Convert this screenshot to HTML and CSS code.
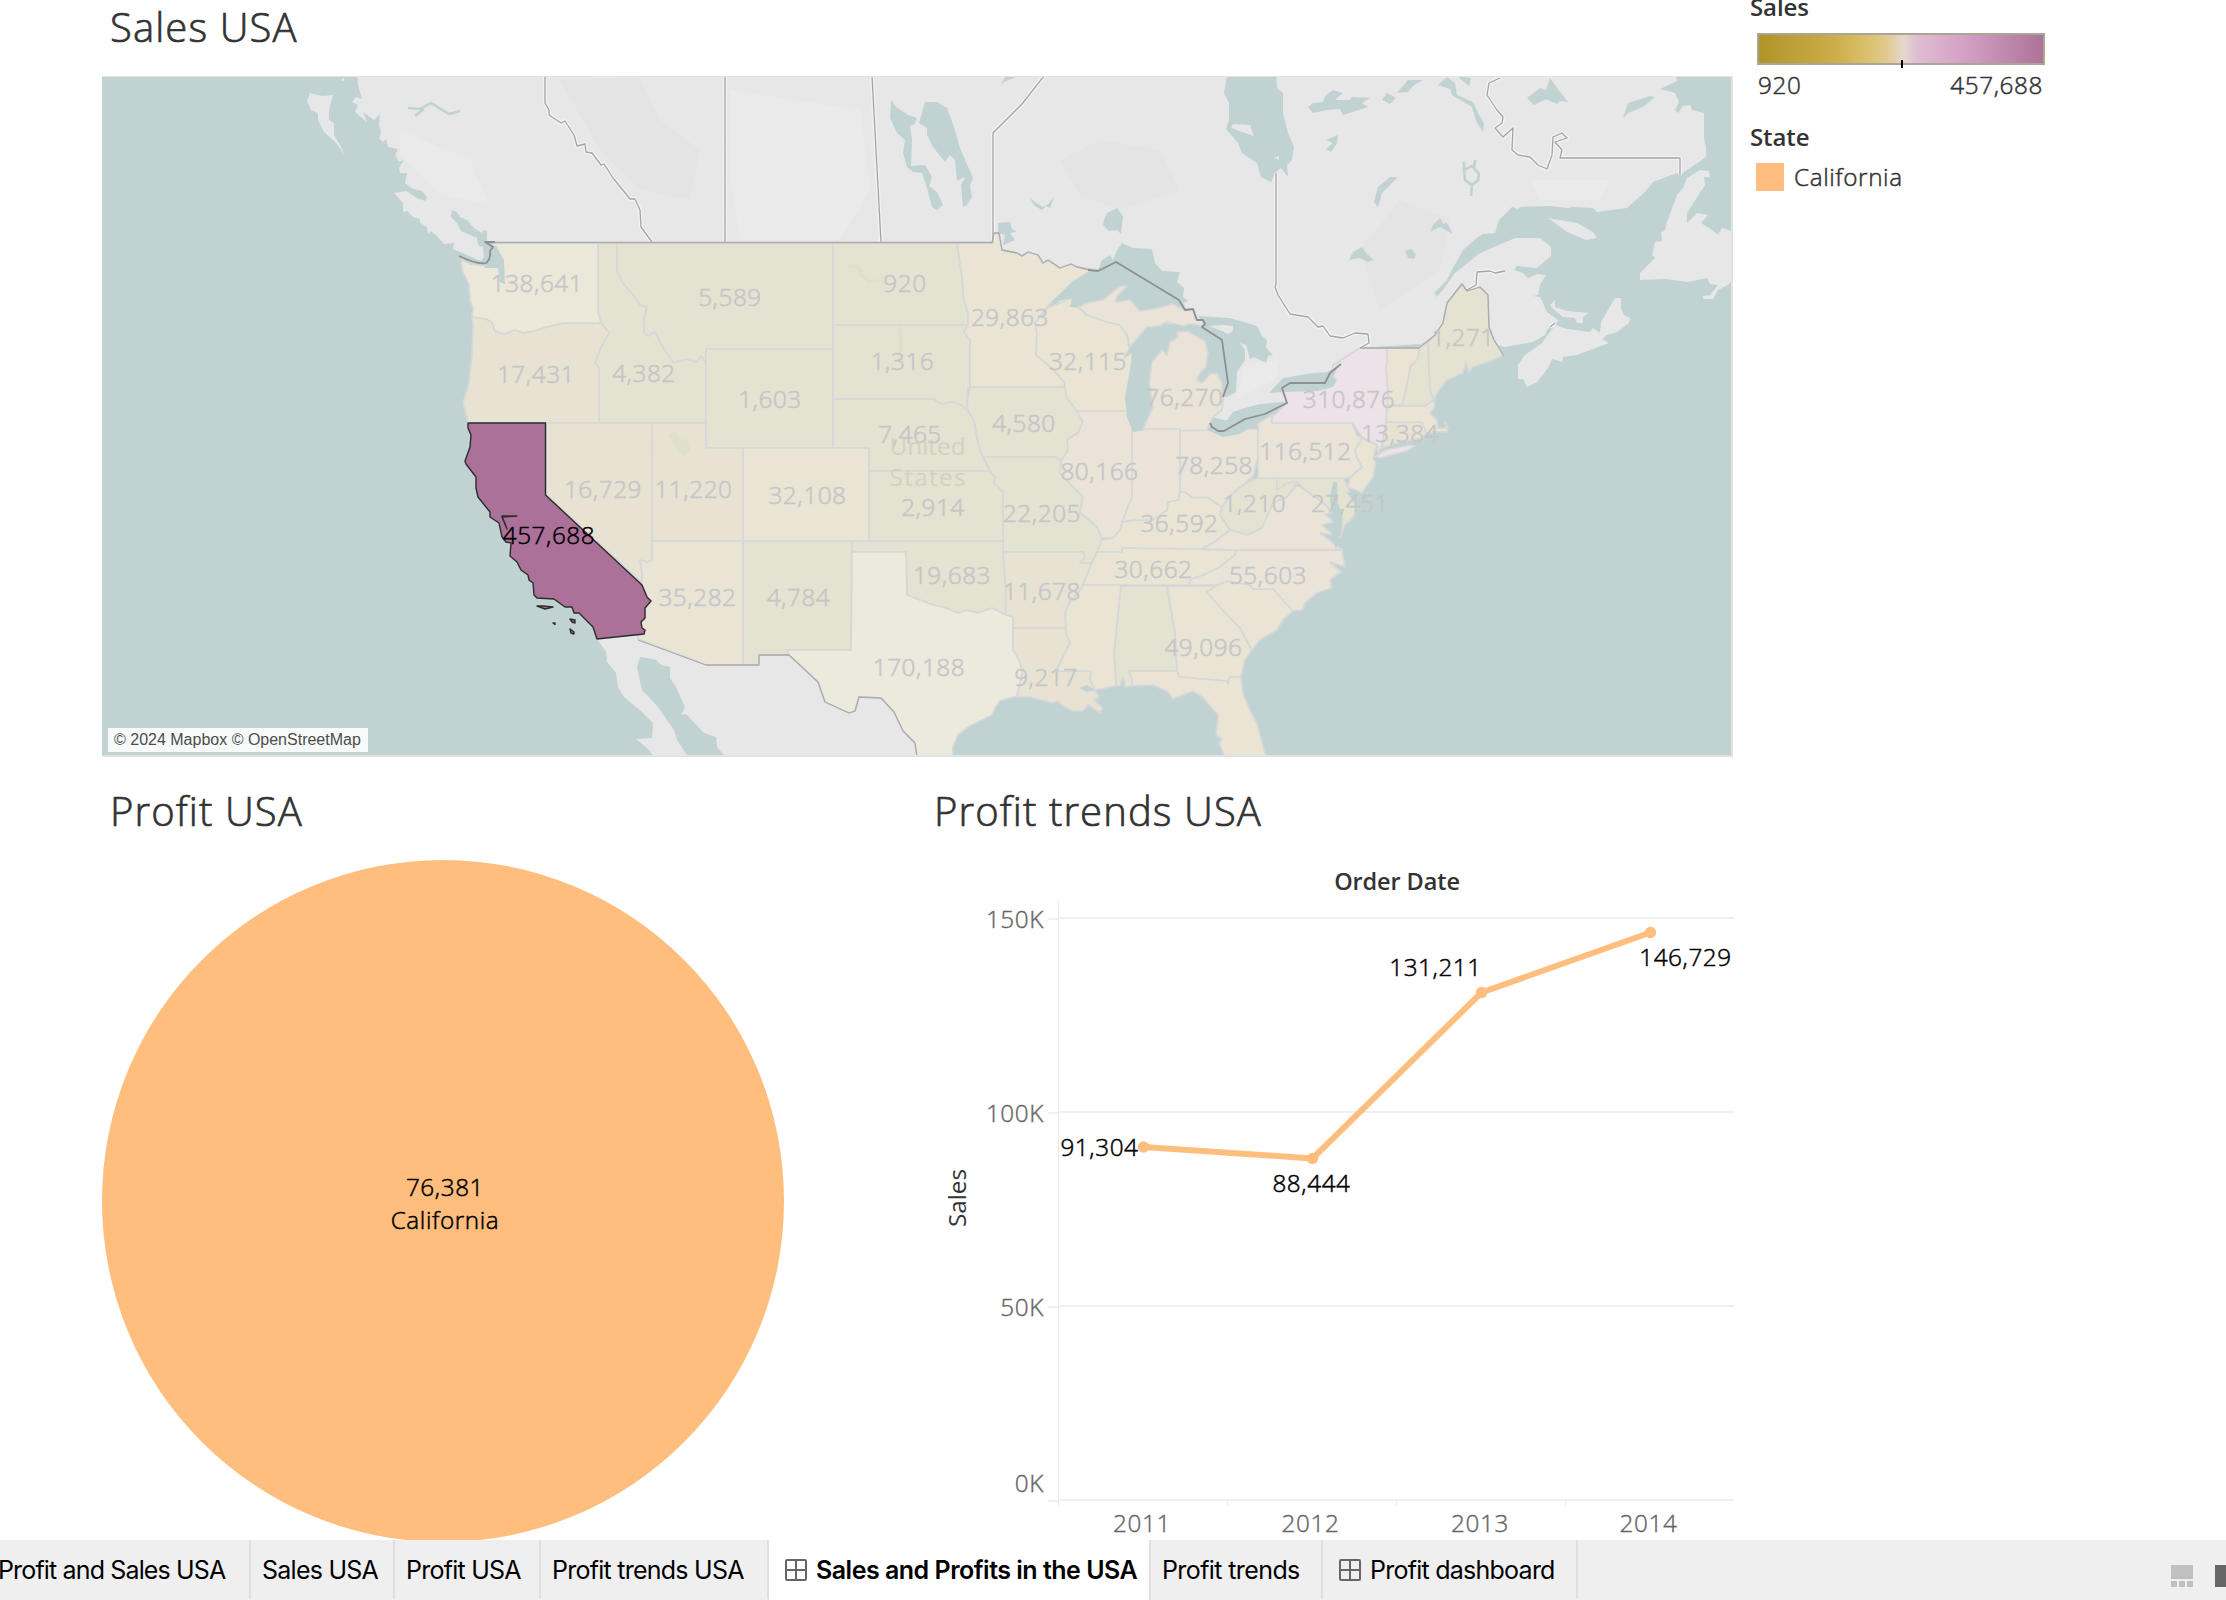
FILE: index.html
```html
<!DOCTYPE html>
<html lang="en">
<head>
<meta charset="utf-8">
<title>Sales and Profits in the USA</title>
<link rel="stylesheet" href="styles.css">
</head>
<body>
<main class="dashboard">
  <div class="views">
    <section class="sales">
      <h2 class="title">Sales USA</h2>
      <div class="map-frame">
        <svg class="map" viewBox="102 77 1629 678" width="1629" height="678">
          <!-- Canada and Mexico -->
          <g class="land">
            <path d="M357 70L358 85 362 99 356 97 352 102 358 105 355 112 367 122 363 112 374 120 380 114 379 125 381 132 379 138 383 142 386 139 388 147 398 149 395 155 399 162 404 160 399 168 400 173 407 173 405 183 413 189 422 191 427 197 425 201 417 198 406 191 394 193 403 203 403 212 407 211 413 217 420 219 420 223 427 227 428 234 431 231 436 235 444 244 454 243 453 249 481 261 484 257 483 247 478 245 477 238 461 231 457 223 451 217 452 210 457 212 460 217 467 220 474 228 482 233 483 230 487 231 487 243 992 243 1050 300 1200 330 1223 400 1213 417 1240 425 1290 400 1360 348 1480 340 1505 347 1533 342 1545 335 1548 328 1542 332 1555 325 1567 329 1590 332 1593 328 1600 333 1601 322 1615 298 1621 298 1621 308 1624 315 1630 318 1629 323 1617 332 1607 335 1602 339 1609 343 1577 355 1563 357 1562 362 1552 359 1548 368 1537 382 1527 387 1523 379 1518 379 1518 365 1525 355 1542 343 1547 336 1556 324 1558 320 1547 312 1540 297 1533 296 1538 295 1540 285 1546 275 1537 274 1528 278 1523 273 1514 270 1517 266 1537 268 1551 256 1551 247 1540 238 1515 238 1480 253 1455 273 1443 290 1436 297 1435 292 1447 280 1453 268 1463 250 1477 238 1483 234 1495 233 1499 220 1512 207 1518 209 1520 207 1550 206 1568 208 1573 207 1593 208 1597 212 1627 208 1645 192 1653 182 1677 173 1680 175 1706 157 1706 148 1704 138 1704 113 1692 110 1690 105 1683 106 1678 113 1675 110 1679 102 1675 93 1660 89 1677 81 1674 70Z"/>
            <path d="M310 93L322 96 333 95 329 110 329 120 334 123 334 135 340 145 345 155 336 143 324 132 318 120 318 113 311 110 307 101Z"/>
            <path d="M1700 170L1709 171 1710 177 1704 177 1705 185 1687 213 1687 223 1697 213 1708 215 1701 223 1712 230 1718 235 1722 228 1734 232 1734 278 1728 285 1718 290 1713 299 1703 299 1703 296 1710 295 1718 285 1710 284 1707 278 1688 282 1665 279 1640 280 1640 273 1655 258 1652 255 1655 242 1662 241 1661 233 1665 230 1667 222 1677 195 1683 188 1687 178Z"/>
            <path d="M1548 218L1577 223 1593 232 1597 238 1586 240 1567 232Z"/>
            <path d="M1550 305L1555 300 1555 307 1567 311 1589 313 1583 317 1583 323 1577 323 1575 318 1563 317 1552 308Z"/>
            <path d="M597 639L606 652 607 662 616 673 618 687 624 697 642 712 653 723 652 738 636 739 649 750 656 760 690 760 677 740 674 730 667 720 658 707 642 690 637 667 640 657 647 658 656 660 661 665 670 667 670 678 676 687 685 707 681 715 686 714 704 733 716 737 717 747 728 760 920 760 900 690 789 650 640 630Z"/>
            <path d="M341 80l3 -2 0 3zM661 723l4 5 3 3-4-1z"/>
          </g>
          <g class="relief">
            <path d="M560 80L640 78 660 120 700 150 690 200 640 190 600 150zM1060 160l40 -20 60 10 20 40-60 20-40-15zM1400 200l50 20-10 50-60 40-20-60z"/>
            <path class="relief-light" d="M400 130l70 30 20 45-50-10-40-40zM730 90l130 20 10 80-30 50-100 0-10-60zM1530 180l80 0-10 20-60 0zM1245 365l35-5-5 20-40 20z"/>
          </g>

          <!-- States, grouped by fill -->
          <g class="state olive">
            <path d="M598 243H617V270L623 283 635 297 640 305 647 307 644 320 644 332 648 336 655 332 663 347 674 363 686 359 697 362 701 356 706 362V423H598V368L595 363 601 347 609 333 601 323 598 312Z"/>
            <path d="M617 243H833V349H706V362L701 356 697 362 686 359 674 363 663 347 655 332 648 336 644 332 644 320 647 307 640 305 635 297 623 283 617 270Z"/>
            <path d="M833 243H957L959 257 962 277 964 300 968 313V325H833Z"/>
            <path d="M833 325H968L964 332 970 340V387H968L967 402 968 411 961 405 952 402 942 404 933 399H833Z"/>
            <path d="M833 399H933L942 404 952 402 961 405 968 411 974 420 977 437 981 453 985 460 990 471H869V448H833Z"/>
            <path d="M706 349H833V448H706Z"/>
            <path d="M869 471H990L995 477 994 483 1003 492V541H869Z"/>
            <path d="M743 541H852L851 650H787L789 655H759V665H743Z"/>
            <path d="M852 541H1003V552L1006 590V615L992 608 978 613 967 610 958 613 943 607 933 605 920 600 907 595 906 552H852Z"/>
            <path d="M970 387H1065L1068 397 1077 410 1083 422 1078 433 1067 440 1068 450 1061 461 1056 457H983L981 453 977 437 974 420 968 411 967 402Z"/>
            <path d="M983 457H1056L1061 461 1060 473 1073 487 1083 497 1080 512 1097 527 1102 540 1097 552 1092 563H1080L1085 557 1083 552H1003V492L994 483 995 477 990 471Z"/>
            <path d="M1258 478H1277V490L1287 483 1297 482 1287 497 1273 503 1262 528 1247 535 1230 530 1220 515 1222 507 1233 492 1252 480Z"/>
            <path d="M1277 478H1343L1348 487 1352 500 1357 507 1353 518 1345 525 1340 538 1342 523 1337 507 1332 490 1331 500 1335 514 1323 503 1305 490 1297 482 1287 483 1277 490Z"/>
            <path d="M1121 586H1167L1175 633 1177 671H1129L1132 680V686L1125 687 1123 678 1120 686H1116L1114 653Z"/>
            <path d="M1419 347L1423 343 1428 343 1430 390 1434 400 1425 406H1402L1408 380 1410 367 1418 358Z"/>
            <path d="M1428 343L1435 335 1443 323 1447 303 1462 284 1467 291 1480 287 1488 295 1489 327 1494 340 1504 355 1493 360 1482 364 1473 367 1469 373 1466 362 1463 373 1447 380 1437 393 1434 400 1430 390Z"/>
          </g>
          <g class="state sand">
            <path d="M472 317L486 319 492 322 495 331 504 334 515 330 524 333 533 331 547 327 563 323H601L609 333 601 347 595 363 599 368V423H468L467 417 463 403 469 383 472 353 473 327Z"/>
            <path d="M546 423H652V560L647 562 640 560 642 573V583L546 495Z"/>
            <path d="M652 423H706V448H743V541H652Z"/>
            <path d="M1003 552H1083L1085 557 1080 563H1092L1083 585 1082 588 1070 602 1065 613 1066 628H1013V617L1006 615V590Z"/>
            <path d="M1013 628H1066L1067 637 1070 643 1058 667V671H1091L1090 680 1095 690 1099 697 1094 700 1103 708 1100 713 1088 705 1083 711H1073L1063 706 1058 701 1052 703 1030 697H1017L1022 673 1020 662 1013 650Z"/>
            <path d="M1386 422H1422L1427 432 1423 438 1400 442 1382 448Z"/>
          </g>
          <g class="state tan">
            <path d="M743 448H869V541H743Z"/>
            <path d="M652 541H743V665H706L638 639 637 636 644 634 645 630 642 628 641 622 645 618V608L651 601 647 597 642 585V573L640 560 647 562 652 560Z"/>
            <path d="M957 243H993L994 233 999 233 1002 250 1017 253 1022 256 1028 252 1038 255 1043 263 1048 260 1060 268 1071 264 1077 267 1099 270 1077 282 1049 305 1035 323 1037 332 1036 355 1052 368 1064 382 1065 387H970V340L964 332 968 325V313L964 300 962 277 959 257Z"/>
            <path d="M1047 308L1072 298 1080 307 1087 315 1107 322 1120 325 1127 335 1129 347 1135 346 1135 411H1077L1067 398 1064 382 1052 368 1036 355 1037 332 1035 323Z"/>
            <path d="M1122 548L1202 549 1213 543 1230 530 1220 515 1222 507 1207 497 1193 498 1185 492H1180L1178 500 1168 502 1167 510 1153 520 1133 520 1122 522 1120 530 1113 538 1102 540 1097 552H1122Z"/>
            <path d="M1097 552H1122V548L1237 550 1235 555 1220 567 1203 575 1190 580 1189 585H1083L1087 575 1092 563Z"/>
            <path d="M1083 585H1121L1114 653 1116 686 1095 690 1090 680 1091 671H1058V667L1070 643 1067 637 1066 628 1065 613 1070 602 1082 588Z"/>
            <path d="M1167 586H1217L1207 592 1220 607 1240 628 1248 643 1252 650 1245 660 1241 677H1230L1228 684 1227 681 1179 677 1177 671 1175 633Z"/>
            <path d="M1217 585L1228 581 1250 585 1253 589H1273L1293 611 1283 620 1277 630 1260 640 1252 650 1248 643 1240 628 1220 607 1207 592Z"/>
            <path d="M1129 671H1177L1179 677 1227 681 1228 684 1230 677H1241L1243 693 1250 710 1257 723 1267 760H1226L1219 743 1222 739 1216 735 1218 715 1202 697 1193 691 1183 695 1173 699 1168 692 1153 685 1132 686V680Z"/>
            <path d="M1362 438L1377 445 1373 458 1376 462 1373 477 1362 493 1348 487 1350 477 1362 467 1357 458 1355 450Z"/>
            <path d="M1387 348H1419L1418 358 1410 367 1408 380 1402 405H1386L1388 393 1386 370Z"/>
            <path d="M1386 406H1425L1434 400 1435 407 1430 413 1437 420 1438 428H1447L1445 422 1448 427 1447 432 1433 432 1427 434 1422 422H1386Z"/>
          </g>
          <g class="state peach">
            <path d="M1077 411H1132V498L1130 502 1122 522 1120 530 1113 538H1102L1097 527 1080 512 1083 497 1073 487 1060 473 1061 461 1068 450 1067 440 1078 433 1083 422Z"/>
            <path d="M1132 428H1180V492L1178 500 1168 502 1167 510 1153 520 1133 520 1122 522 1130 502 1132 498Z"/>
            <path d="M1180 429H1258V457L1253 477 1240 487 1233 493 1222 507 1207 497 1193 498 1185 492H1180Z"/>
            <path d="M1258 423L1272 415V423H1352L1357 435 1362 438 1355 450 1357 458 1362 467 1350 477V478H1258Z"/>
            <path d="M1202 549L1213 543 1230 530 1247 535 1262 528 1273 503 1287 497 1297 485 1305 490 1323 503 1333 513 1325 514 1334 522 1322 525 1334 535 1320 533 1342 550H1237Z"/>
            <path d="M1189 585L1190 580 1203 575 1220 567 1235 555 1237 550H1342L1345 567 1330 562 1341 572 1330 580 1332 588 1317 593 1305 603 1303 610 1293 611 1273 589H1253L1250 585 1228 581 1217 585Z"/>
          </g>
          <path class="state cream" d="M461 259L470 264 485 266 493 262 496 254 492 243H598V312L601 323H563L547 327 533 331 524 333 515 330 504 334 495 331 492 322 486 319 472 317 473 308 470 300 469 285 462 270Z"/>
          <path class="state ivory" d="M852 552H906L907 595 920 600 933 605 943 607 958 613 967 610 978 613 992 608 1006 615 1013 617V650L1020 662 1022 673 1017 696 1000 701 995 708 992 715 968 727 958 735 953 747V760H917L915 743 903 731 894 712 881 698 859 697 855 711 849 713 825 702 818 682 789 655 787 650H851Z"/>
          <path class="state pink" d="M1272 423V417L1287 403 1282 391 1333 385 1333 365 1360 348H1387V360L1386 370 1388 393 1386 422 1382 445 1378 453 1377 445 1362 437 1355 427 1352 423ZM1375 457L1385 450 1410 445 1415 446 1407 451 1380 458Z"/>

          <!-- Lakes and inlets -->
          <g class="water">
            <path d="M1050 303L1073 281 1088 272 1098 270 1102 260 1107 257 1110 255 1113 260 1117 250 1122 243 1133 248 1152 249 1155 263 1162 271 1180 272 1177 282 1184 288 1183 297 1188 301 1183 303 1186 309 1173 314 1140 313 1080 308 1070 307 1072 298Z"/>
            <path d="M1134 340L1147 326 1205 322 1200 350 1165 360 1160 410 1148 429 1140 431 1133 432 1127 417 1125 397 1130 370 1132 353 1123 359Z"/>
            <path d="M1198 316L1230 318 1257 326 1262 336 1267 340 1266 348 1273 355 1268 356 1266 363 1254 357 1250 359 1246 345 1240 343 1245 350V360L1237 372 1236 392 1227 397 1215 395 1190 385 1200 335 1180 330 1203 322Z"/>
            <path d="M1211 425L1207 430 1223 437 1240 434 1258 422 1273 412 1287 402 1282 402 1260 404 1245 408 1233 412 1227 420Z"/>
            <path d="M1269 393L1283 378 1313 373 1330 372 1338 367 1333 377 1337 380 1333 387 1317 391 1283 392Z"/>
            <path d="M1228 70H1276L1277 88 1283 93V113L1288 133 1294 147 1292 160 1287 165 1288 177 1281 168 1275 173 1271 182 1261 177 1257 163 1242 153 1238 143 1226 129 1229 120V103L1224 93Z"/>
            <path d="M925 102H937L947 108 954 127 960 148 973 178 970 186 972 197 967 205 963 207 961 185 965 177 957 181 955 160 950 155 945 162 933 147 927 135V128L919 123Z"/>
            <path d="M891 100L896 107 908 115 917 118 915 124 910 126 912 140 911 166 925 165 932 177 929 186 937 192 943 205 937 210 932 207 927 188 922 173 913 172 907 167 903 153 905 140 897 133 890 118Z"/>
            <path d="M998 223L1010 222 1012 229 1017 232 1010 233 1015 240 1003 245 1005 235 998 233Z"/>
            <path d="M1104 220L1107 213 1117 208 1123 216 1121 234 1117 230 1109 231 1103 225Z"/>
            <path d="M1308 107L1313 103 1323 102 1325 96 1333 90 1343 93 1335 100 1350 100 1352 97 1370 98 1362 103 1368 107 1343 115 1340 109 1327 110 1313 113Z"/>
            <path d="M1382 100L1387 93 1396 98 1390 104ZM1397 93L1408 80 1423 80 1413 86 1408 92Z"/>
            <path d="M1438 85L1447 77 1455 83 1457 95 1473 102 1478 113 1484 123 1483 132 1476 121 1472 107 1452 95 1450 89ZM1457 76l14 2-2 8z"/>
            <path d="M1527 98L1540 88 1546 90 1550 78 1557 88 1568 102 1560 101 1557 104 1546 99 1534 105Z"/>
            <path d="M1623 118L1628 103 1650 96 1655 97 1643 107 1628 113Z"/>
            <path d="M1374 202L1378 187 1390 177 1398 177 1382 193 1378 207Z"/>
            <path d="M1430 232L1433 225 1440 218 1443 224 1447 223 1453 234 1440 227Z"/>
            <path d="M1349 260L1353 252 1362 247 1367 254 1374 260 1368 262 1360 258ZM1405 251l6-2 5 5-2 5-6-1z"/>
            <path d="M1326 140L1338 135 1337 143 1331 152 1326 149 1333 143Z"/>
            <path d="M1029 197L1035 202 1043 207 1048 204 1054 197 1050 208 1046 206 1042 210 1035 206Z"/>
            <path d="M1000 85L1006 76 1016 77 1004 82Z"/>
            <path d="M1333 482l4 0 1 22 4 8 0 14-6 24-4-14 1-18-3-18zM1346 492l14 2-3 12-6-8z"/>
            <path d="M488 244l8 2 8 14 1 24-5-2-2-14-14 0 8-12z"/>
            <path d="M1079 688l8-3 8 5-8 2z"/>
          </g>
          <g class="river">
            <path d="M408 108L420 109 431 103 449 114 460 111M415 116L424 109"/>
            <path d="M1464 162l0 10M1475 160l-1 8M1472 184l-1 12"/>
            <path d="M1464 170l8-4 7 8-1 6-6 5-7-5z"/>
          </g>
          <path class="land" d="M1233 124L1250 125 1254 136 1245 133 1231 128ZM1209 326L1223 325 1233 326 1233 331 1228 334 1222 331ZM1274 158l5-2 0 4z"/>
          <path class="state peach" d="M1143 429L1153 407 1149 383 1152 362 1162 350 1167 355 1170 342 1178 337 1177 332 1187 331 1205 341 1208 353 1206 367 1200 373 1197 380 1202 383 1210 374 1217 373 1222 383 1223 400 1222 410 1213 417 1207 430 1180 431V429Z"/>
          <path class="state peach" d="M1078 307L1090 302 1103 300 1120 286 1127 286 1118 295 1115 302 1130 300 1140 311 1153 309 1173 304 1185 310 1193 309 1195 320 1203 320V326L1190 324 1183 326 1167 322 1160 326 1147 327 1130 347 1127 335 1120 325 1107 322 1087 315Z"/>

          <!-- Lakes that show through the faded states -->
          <path class="faint-water" d="M669 434l7-3 4 8 7 1 3 10-7 6-8-9z"/>
          <path class="faint-river" d="M848 267q12-4 13 8l8 7 13-2M899 326q5 20-1 36"/>

          <!-- Provincial and national borders -->
          <g class="halo">
            <path d="M545 76V103L549 110V115L561 123 565 121 574 135 577 146 585 144 586 152 592 153 601 165 604 164 613 178 630 199 635 199 640 210 641 227 652 242M725 76V242M872 76L881 242M1044 76L1022 104 993 133V242M1276 173V283L1275 287 1278 295 1290 314 1308 317 1318 327 1323 326 1330 336 1343 338 1355 333 1368 334 1369 343 1360 348M1500 78L1489 83 1487 95 1497 110 1503 117 1502 123 1495 128 1503 137 1513 128 1512 150 1518 155 1530 157 1538 165 1547 169 1552 155 1553 137 1562 133 1567 138 1555 142 1562 150 1560 158H1680V175M1467 290L1476 285 1477 272 1490 271 1495 273 1505 271M1550 327l5-4"/>
          </g>
          <g class="province">
            <path d="M545 76V103L549 110V115L561 123 565 121 574 135 577 146 585 144 586 152 592 153 601 165 604 164 613 178 630 199 635 199 640 210 641 227 652 242M725 76V242M872 76L881 242M1044 76L1022 104 993 133V242M1276 173V283L1275 287 1278 295 1290 314 1308 317 1318 327 1323 326 1330 336 1343 338 1355 333 1368 334 1369 343 1360 348M1500 78L1489 83 1487 95 1497 110 1503 117 1502 123 1495 128 1503 137 1513 128 1512 150 1518 155 1530 157 1538 165 1547 169 1552 155 1553 137 1562 133 1567 138 1555 142 1562 150 1560 158H1680V175M1467 290L1476 285 1477 272 1490 271 1495 273 1505 271M1550 327l5-4"/>
          </g>
          <path class="frontier-soft" d="M490 242.500H992L994 233H999L1002 250 1017 253 1022 256 1028 252 1038 255 1043 263 1048 260 1060 268 1071 264 1077 267 1090 270M638 640L706 665H759V655H789L818 682 825 702 849 713 855 711 859 697 881 698 894 712 903 731 915 743 917 757M1360 348H1419L1435 335 1443 323 1447 303 1462 284 1467 291 1480 287 1488 295 1489 327 1494 340 1504 356"/>
          <path class="frontier" d="M459 256Q478 265 486 263 491 259 490 251L493 247 485 242H495M1088 270L1098 271 1116 262 1179 300 1185 310 1193 309 1197 320 1203 320 1205 324 1202 327 1222 340 1228 383 1223 397M1210 423L1212 427 1218 431H1224L1245 419 1265 414 1287 403 1282 388 1290 383H1325L1330 373 1341 364"/>

          <!-- Selected state -->
          <path class="selected" d="M468 423H545.500V495L642 585 647 597 651 601 645 608V618L641 622 642 628 645 630 644 634 597 639 593 627 579 613H574L572 607H565L554 599 537 598 534 595 533 583 529 580 528 575 521 570 517 562 510 556 511 543 506 542 502 537 499 523 490 517V512L478 497 476 488V477L466 464 465 461 470 447 471 435 468 428ZM537 606l6 0 10 1-8 2zM570 619l5 1 0 3-3-1zM570 629l4 3 0 2-3-1zM553 623l2 0 0 1.500zM502 516l15 0-15 1 5 12z"/>

          <g class="place">
            <text x="927.500" y="455" textLength="76">United</text>
            <text x="927.500" y="486" textLength="76">States</text>
          </g>
          <g class="label">
            <text x="537" y="292">138,641</text><text x="536" y="383">17,431</text>
            <text x="730" y="306">5,589</text><text x="905" y="292">920</text>
            <text x="644" y="382">4,382</text><text x="770" y="408">1,603</text>
            <text x="902.500" y="370">1,316</text><text x="910" y="443">7,465</text>
            <text x="603" y="498">16,729</text><text x="693.500" y="498">11,220</text>
            <text x="807.500" y="504">32,108</text><text x="933" y="516">2,914</text>
            <text x="697.500" y="606">35,282</text><text x="798.500" y="606">4,784</text>
            <text x="952" y="584">19,683</text><text x="919" y="676">170,188</text>
            <text x="1010" y="326">29,863</text><text x="1088" y="370">32,115</text>
            <text x="1184.500" y="406">76,270</text><text x="1024" y="432">4,580</text>
            <text x="1099.500" y="480">80,166</text><text x="1214" y="474">78,258</text>
            <text x="1305.500" y="460">116,512</text><text x="1349" y="408">310,876</text>
            <text x="1254.500" y="512">1,210</text><text x="1350" y="512">27,451</text>
            <text x="1042" y="522">22,205</text><text x="1179.500" y="532">36,592</text>
            <text x="1153.500" y="578">30,662</text><text x="1268" y="584">55,603</text>
            <text x="1042" y="600">11,678</text><text x="1203.500" y="656">49,096</text>
            <text x="1046" y="686">9,217</text><text x="1463" y="346">1,271</text>
            <text x="1400" y="442">13,384</text>
          </g>
          <text class="label label-active" x="549" y="544">457,688</text>
        </svg>
        <p class="attribution">© 2024 Mapbox © OpenStreetMap</p>
      </div>
    </section>

    <div class="row">
      <section class="profit">
        <h2 class="title">Profit USA</h2>
        <div class="pie"><span>76,381</span><span>California</span></div>
      </section>
      <section class="trends">
        <h2 class="title">Profit trends USA</h2>
        <svg class="chart" viewBox="934 850 800 690" width="800" height="690">
          <text class="heading" x="1397" y="890">Order Date</text>
          <path class="grid" d="M1059 918H1734M1059 1112H1734M1059 1306H1734M1059 1500H1734M1048 919H1059M1048 1113H1059M1048 1307H1059M1048 1501H1059"/>
          <path class="axis" d="M1058.500 900V1506M1227.500 1500V1506M1396.500 1500V1506M1565.500 1500V1506"/>
          <g class="tick-y">
            <text x="1044" y="928">150K</text><text x="1044" y="1122">100K</text>
            <text x="1044" y="1316">50K</text><text x="1044" y="1492">0K</text>
          </g>
          <g class="tick-x">
            <text x="1142" y="1532">2011</text><text x="1310.500" y="1532">2012</text>
            <text x="1480" y="1532">2013</text><text x="1648.500" y="1532">2014</text>
          </g>
          <text class="axis-title" transform="translate(966 1198) rotate(-90)">Sales</text>
          <polyline class="line" points="1143.500,1147 1312.500,1158.500 1481.500,992.500 1650.500,932.500"/>
          <g class="dot">
            <circle cx="1143.500" cy="1147" r="5.700"/><circle cx="1312.500" cy="1158.500" r="5.700"/>
            <circle cx="1481.500" cy="992.500" r="5.700"/><circle cx="1650.500" cy="932.500" r="5.700"/>
          </g>
          <g class="mark">
            <text x="1099.500" y="1156">91,304</text><text x="1311.500" y="1192">88,444</text>
            <text x="1435.500" y="976">131,211</text><text x="1685.500" y="966">146,729</text>
          </g>
        </svg>
      </section>
    </div>
  </div>

  <aside class="legends">
    <h3 class="legend-title">Sales</h3>
    <div class="ramp"><i class="ramp-tick"></i></div>
    <div class="range"><span>920</span><span>457,688</span></div>
    <h3 class="legend-title">State</h3>
    <div class="item"><i class="swatch"></i>California</div>
  </aside>
</main>

<nav class="tabs">
  <a class="tab tab-first">Profit and Sales USA</a>
  <a class="tab tab-sales">Sales USA</a>
  <a class="tab tab-profit">Profit USA</a>
  <a class="tab tab-trends-usa">Profit trends USA</a>
  <a class="tab tab-active"><svg class="grid-icon" width="22" height="22" viewBox="0 0 22 22"><rect x="1" y="1" width="20" height="20" rx="1"/><path d="M11 1V21M1 11H21"/></svg>Sales and Profits in the USA</a>
  <a class="tab tab-trends">Profit trends</a>
  <a class="tab tab-dash"><svg class="grid-icon" width="22" height="22" viewBox="0 0 22 22"><rect x="1" y="1" width="20" height="20" rx="1"/><path d="M11 1V21M1 11H21"/></svg>Profit dashboard</a>
  <svg class="view-icons" width="55" height="22" viewBox="0 0 55 22">
    <path fill="#c0c0c0" d="M0 0H22V14H0zM0 16H6V22H0zM8 16H14V22H8zM16 16H22V22H16z"/>
    <path fill="#666" d="M44 0H55V22H44z"/>
  </svg>
</nav>
</body>
</html>
```
FILE: styles.css
```css
* { box-sizing: border-box; }
body {
  margin: 0;
  width: 2226px;
  height: 1600px;
  overflow: hidden;
  display: flex;
  flex-direction: column;
  background: #fff;
  color: #333;
  font-family: "Open Sans", "Noto Sans", sans-serif;
  font-size: 24.3px;
  letter-spacing: .6px;
}
.dashboard { height: 1540px; display: flex; overflow: hidden; }
.views { width: 1734px; padding-left: 102px; flex: none; }
.title {
  margin: 0;
  padding-left: 8px;
  font-size: 40px;
  line-height: 54px;
  font-weight: 300;
  letter-spacing: 1.1px;
  white-space: nowrap;
  -webkit-text-stroke: .7px #333;
}
.sales .title { height: 76px; }

/* Map */
.map-frame { position: relative; width: 1631px; height: 681px; border: solid #e0e3e3; border-width: 1px 2px 2px 0; }
.map { display: block; width: 1629px; height: 678px; background: #c1d2d2; }
.land { fill: #e7e7e7; }
.relief { fill: #e3e3e3; opacity: .5; }
.relief-light { fill: #ededed; }
.water { fill: #c1d2d2; }
.river { fill: none; stroke: #c1d2d2; stroke-width: 2.6; }
.faint-water { fill: #dedfcd; }
.faint-river { fill: none; stroke: #dedfcd; stroke-width: 3; }
.state { stroke: #d5d7d9; stroke-width: 1.7; stroke-linejoin: round; }
.olive { fill: #e4e2d1; }
.sand { fill: #e8e2d3; }
.tan { fill: #e9e4d4; }
.peach { fill: #eae3d7; }
.cream { fill: #ebe8d9; }
.ivory { fill: #ece9dd; }
.pink { fill: #ece2e8; }
.halo, .province, .frontier, .frontier-soft { fill: none; stroke-linejoin: round; }
.halo { stroke: #f2f2f2; stroke-width: 4; }
.province { stroke: #a4a4a4; stroke-width: 1.3; }
.frontier { stroke: #8d9090; stroke-width: 1.8; }
.frontier-soft { stroke: #a9abae; stroke-width: 1.3; }
.selected { fill: #ab7199; stroke: #2c2c2c; stroke-width: 1.4; stroke-linejoin: round; }
.label { fill: #c5c6c8; font-weight: 300; text-anchor: middle; stroke: #c5c6c8; stroke-width: .6; }
.label-active { fill: #000; stroke: #000; stroke-width: .5; }
.place { fill: #d3d1c3; text-anchor: middle; letter-spacing: 0; }
.attribution {
  position: absolute;
  left: 6px;
  bottom: 3px;
  margin: 0;
  width: 260px;
  padding-left: 6px;
  background: rgba(255, 255, 255, .88);
  color: #4c4c4c;
  font: 16px/24px "Liberation Sans", sans-serif;
  letter-spacing: 0;
  white-space: nowrap;
}

/* Lower views */
.row { display: flex; padding-top: 27px; }
.profit { width: 824px; flex: none; }
.pie {
  width: 682px;
  height: 682px;
  margin-top: 22px;
  border-radius: 50%;
  background: #ffbe7d;
  color: #000;
  display: flex;
  flex-direction: column;
  align-items: center;
  justify-content: center;
  padding: 4px 0 0 4px;
  line-height: 33px;
  font-weight: 300;
  -webkit-text-stroke: .5px #000;
}
.chart { display: block; margin: 12px 0 0 8px; font-weight: 300; }
.heading { font-weight: 600; fill: #333; text-anchor: middle; letter-spacing: -.1px; }
.grid { stroke: #f0f0f0; stroke-width: 2; }
.axis { stroke: #ececec; stroke-width: 1; }
.tick-y, .tick-x { fill: #666; stroke: #666; stroke-width: .4; }
.tick-y { text-anchor: end; }
.tick-x { text-anchor: middle; }
.axis-title { fill: #333; font-weight: 400; text-anchor: middle; letter-spacing: 0; }
.line { fill: none; stroke: #ffbe7d; stroke-width: 6; stroke-linejoin: round; }
.dot { fill: #ffbe7d; }
.mark { fill: #000; stroke: #000; stroke-width: .5; text-anchor: middle; }
.heading { font-size: 23.5px; }

/* Legends */
.legends { margin: -10px 0 0 17px; width: 300px; line-height: 34px; font-weight: 300; -webkit-text-stroke: .5px #333; }
.legend-title { margin: 0 0 0 -1px; font-size: 24px; font-weight: 600; line-height: 34px; letter-spacing: -.1px; -webkit-text-stroke: 0; }
.ramp {
  position: relative;
  margin: 9px 0 0 6px;
  width: 288px;
  height: 32px;
  border: 2px solid #aaa595;
  background: linear-gradient(90deg, #b09428 0%, #cdae4b 27%, #dbc270 39%, #e0c98f 45%, #e4d8cf 51%, #e0bbd2 56%, #d3a0c5 73%, #ad7399 100%);
}
.ramp-tick { position: absolute; left: 142px; top: 25px; width: 2px; height: 8px; background: #000; }
.range { display: flex; justify-content: space-between; width: 292px; padding: 3px 0 0 7px; height: 55px; }
.item { display: flex; align-items: center; gap: 10px; padding-left: 5px; margin-top: 6px; }
.swatch { width: 28px; height: 28px; background: #ffbe7d; }

/* Sheet tabs */
.tabs {
  position: relative;
  height: 60px;
  display: flex;
  background: #efefef;
  color: #000;
  font: 25px/60px Inter, "Liberation Sans", sans-serif;
  letter-spacing: -.75px;
}
.tab { flex: none; display: flex; align-items: center; height: 59px; border-right: 2px solid #dfdfdf; padding-left: 11px; white-space: nowrap; }
.tab-first { width: 251px; padding-left: 0; text-indent: -2px; letter-spacing: -.85px; }
.tab-sales { width: 144px; }
.tab-profit { width: 146px; }
.tab-trends-usa { width: 228px; }
.tab-active { width: 382px; padding-left: 16px; background: #fff; font-weight: 600; height: 60px; letter-spacing: -.5px; }
.tab-trends { width: 172px; letter-spacing: -.6px; }
.tab-dash { width: 255px; padding-left: 16px; }
.grid-icon { margin-right: 9px; fill: none; stroke: #666; stroke-width: 2; }
.view-icons { margin: 25px 0 0 auto; flex: none; }
```
